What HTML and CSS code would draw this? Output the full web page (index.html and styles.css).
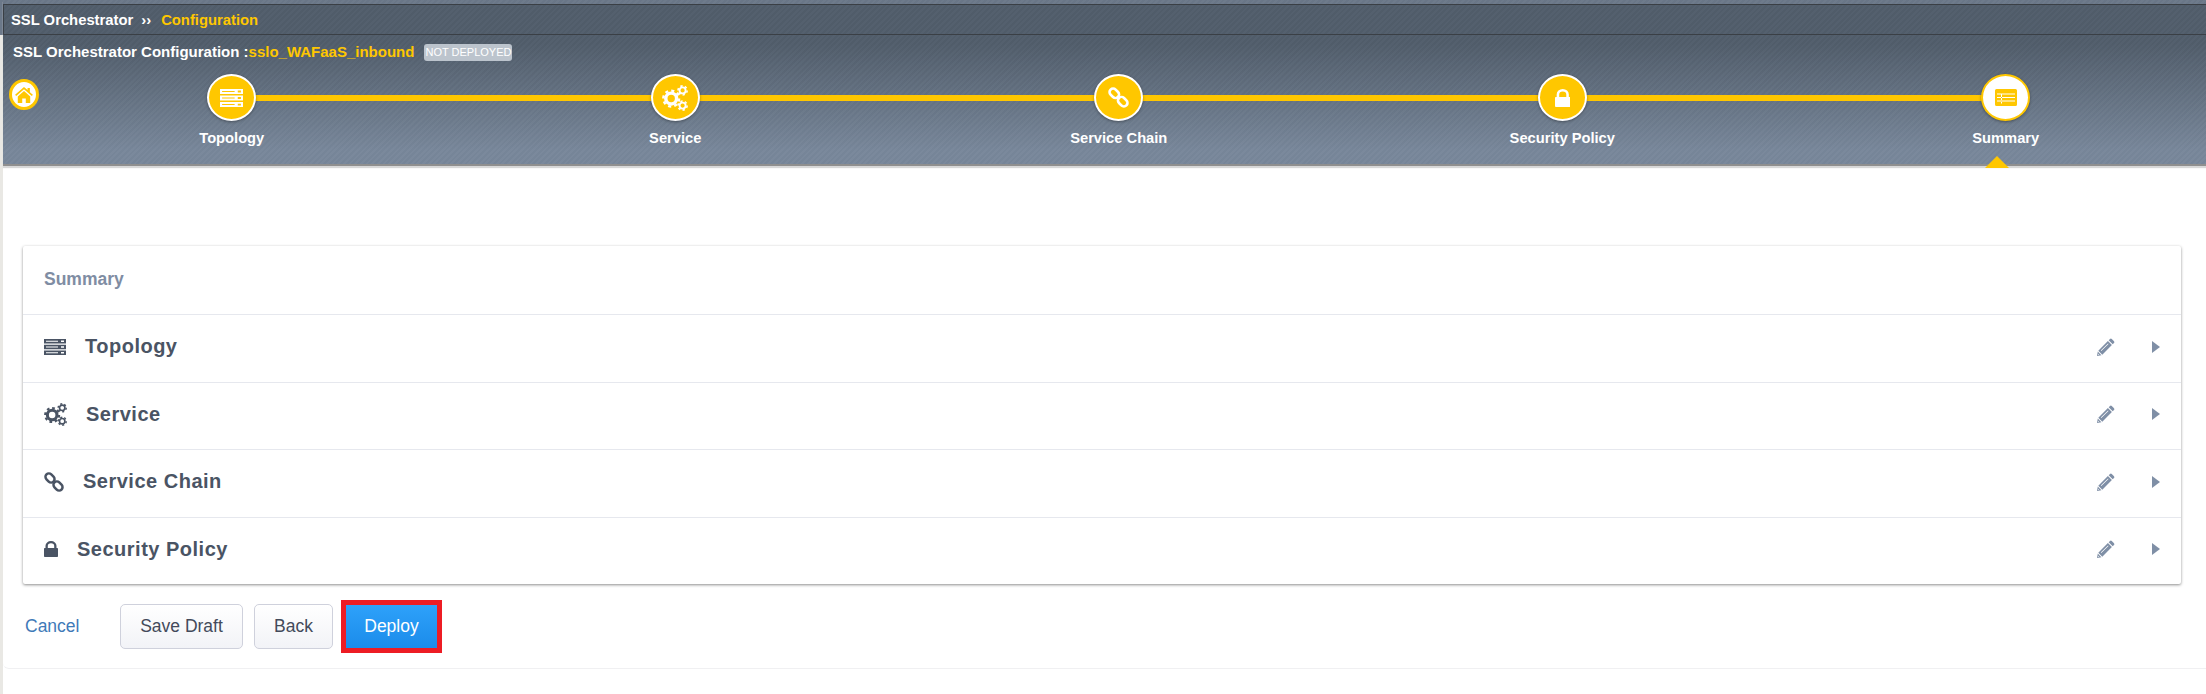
FILE: index.html
```html
<!doctype html>
<html>
    <head>
        <meta charset="utf-8">
        <title>SSL Orchestrator Configuration</title>
        <link rel="stylesheet" href="styles.css">
    </head>
    <body>
        <svg class="defs" width="0" height="0">
            <defs>
                <symbol id="i-topology" viewBox="0 0 22 16" preserveAspectRatio="none">
                    <path fill="currentColor" fill-rule="evenodd" d="M0 0h22v4.400H0zM2 1.700v1h12v-1zM17 1.400v1.600h3V1.400zM0 5.800h22v4.400H0zM2 7.500v1h12v-1zM17 7.200v1.600h3V7.200zM0 11.600h22V16H0zM2 13.300v1h12v-1zM17 13v1.600h3V13z"/>
                </symbol>
                <symbol id="i-gear" viewBox="0 0 24 24">
                    <g fill="none" stroke="currentColor">
                        <circle cx="8.500" cy="12.500" r="5" stroke-width="3.200"/>
                        <circle cx="8.500" cy="12.500" r="7.300" stroke-width="2.200" pathLength="16" stroke-dasharray="1 1"/>
                        <circle cx="19" cy="5" r="2.800" stroke-width="1.700"/>
                        <circle cx="19" cy="5" r="4.200" stroke-width="1.500" pathLength="12" stroke-dasharray="1 1"/>
                        <circle cx="19" cy="19" r="2.800" stroke-width="1.700"/>
                        <circle cx="19" cy="19" r="4.200" stroke-width="1.500" pathLength="12" stroke-dasharray="1 1"/>
                    </g>
                </symbol>
                <symbol id="i-chain" viewBox="0 0 20 20">
                    <g fill="none" stroke="currentColor" stroke-width="2.500">
                        <rect x="-5" y="-3.400" width="10" height="6.800" rx="3.400" transform="translate(6 6) rotate(45)"/>
                        <rect x="-5" y="-3.400" width="10" height="6.800" rx="3.400" transform="translate(14 14) rotate(45)"/>
                    </g>
                </symbol>
                <symbol id="i-lock" viewBox="0 0 14 16" preserveAspectRatio="none">
                    <path fill="currentColor" fill-rule="evenodd" d="M1.500 7V4.800a5.500 4.800 0 0 1 11 0V7h.7a.8.8 0 0 1 .8.800v7.400a.8.8 0 0 1-.8.800H.8a.8.8 0 0 1-.8-.800V7.800A.8.8 0 0 1 .8 7zM3.800 7h6.400V4.900a3.200 2.700 0 0 0-6.400 0z"/>
                </symbol>
                <symbol id="i-summary" viewBox="0 0 22 17" preserveAspectRatio="none">
                    <path fill="currentColor" fill-rule="evenodd" d="M1.500 0h19A1.500 1.500 0 0 1 22 1.500v14a1.500 1.500 0 0 1-1.500 1.500h-19A1.500 1.500 0 0 1 0 15.500v-14A1.500 1.500 0 0 1 1.500 0zM2 4.500v1h18v-1zM2 8v1h18V8zM2 11.500v1h18v-1zM6 5.500v9h1v-9z"/>
                </symbol>
                <symbol id="i-pencil" viewBox="0 0 18 18">
                    <path fill="currentColor" fill-rule="evenodd" d="M13 1a1.300 1.300 0 0 1 1.800 0L17 3.200a1.300 1.300 0 0 1 0 1.800l-1.300 1.300-4-4zM10.900 3.100l4 4L5.300 16.700l-4-4zM11 5.400L3.800 12.600l.5.500 7.200-7.200zM.8 13.600l3.600 3.600L0 18zM1 15.800v1.100l1.100-.3z"/>
                </symbol>
            </defs>
        </svg>

        <header class="top">
            <div class="crumbs">
                <span>SSL Orchestrator</span>
                <span class="crumbs-sep">&rsaquo;&rsaquo;</span>
                <span class="crumbs-now">Configuration</span>
            </div>
            <div class="title">
                <span>SSL Orchestrator Configuration :</span><span class="title-name">sslo_WAFaaS_inbound</span>
                <span class="badge">NOT DEPLOYED</span>
            </div>
            <div class="wizard">
                <a class="home">
                    <svg viewBox="0 0 20 18" width="18" height="16"><path d="M10 0l4 3.500V1h2.600v4.800L20 8.800l-1.200 1.400L10 2.600 1.200 10.200 0 8.800zM3 10.600L10 4.600l7 6V18h-5v-5H8v5H3z"/></svg>
                </a>
                <ul class="steps">
                    <li class="step">
                        <span class="step-dot"><svg class="ico-topology"><use href="#i-topology"/></svg></span>
                        <span class="step-name">Topology</span>
                    </li>
                    <li class="step">
                        <span class="step-dot"><svg class="ico-gear"><use href="#i-gear"/></svg></span>
                        <span class="step-name">Service</span>
                    </li>
                    <li class="step">
                        <span class="step-dot"><svg class="ico-chain"><use href="#i-chain"/></svg></span>
                        <span class="step-name">Service Chain</span>
                    </li>
                    <li class="step">
                        <span class="step-dot"><svg class="ico-lock"><use href="#i-lock"/></svg></span>
                        <span class="step-name">Security Policy</span>
                    </li>
                    <li class="step step-on">
                        <span class="step-dot"><svg class="ico-summary"><use href="#i-summary"/></svg></span>
                        <span class="step-name">Summary</span>
                    </li>
                </ul>
            </div>
        </header>

        <section class="main">
            <div class="card">
                <h2 class="card-head">Summary</h2>
                <div class="row">
                    <svg class="ico-topology"><use href="#i-topology"/></svg>
                    <span class="row-name">Topology</span>
                    <svg class="row-edit"><use href="#i-pencil"/></svg>
                    <i class="row-arrow"></i>
                </div>
                <div class="row">
                    <svg class="ico-gear"><use href="#i-gear"/></svg>
                    <span class="row-name">Service</span>
                    <svg class="row-edit"><use href="#i-pencil"/></svg>
                    <i class="row-arrow"></i>
                </div>
                <div class="row">
                    <svg class="ico-chain"><use href="#i-chain"/></svg>
                    <span class="row-name">Service Chain</span>
                    <svg class="row-edit"><use href="#i-pencil"/></svg>
                    <i class="row-arrow"></i>
                </div>
                <div class="row">
                    <svg class="ico-lock"><use href="#i-lock"/></svg>
                    <span class="row-name">Security Policy</span>
                    <svg class="row-edit"><use href="#i-pencil"/></svg>
                    <i class="row-arrow"></i>
                </div>
            </div>
            <div class="actions">
                <a class="cancel">Cancel</a>
                <button class="btn btn-save">Save Draft</button>
                <button class="btn btn-back">Back</button>
                <button class="btn btn-deploy">Deploy</button>
            </div>
        </section>
    </body>
</html>
```

FILE: styles.css
```css
*{
    margin: 0px;
    padding: 0px;
    box-sizing: border-box;
}
html,body{
    height: 100%;
    overflow: hidden;
}
body{
    font-family: "Liberation Sans", Arial, sans-serif;
    padding-left: 3px;
    background:
        linear-gradient(#6b7889, #6b7889) left top / 3px 35px no-repeat,
        linear-gradient(#e9e8e4, #e9e8e4) left top / 3px 100% no-repeat,
        #fff;
}
.defs{
    display: block;
    height: 0;
}
ul{
    list-style: none;
}

/* header */
.top{
    height: 166px;
    border-bottom: 2px solid #8f8f8f;
    box-shadow: 0 2px 1px #d8d8d8;
    background-color: #6c7a8b;
    background-image:
        repeating-linear-gradient(135deg, rgba(255,255,255,.02) 0, rgba(255,255,255,.02) 2px, rgba(0,0,0,.015) 2px, rgba(0,0,0,.015) 4px),
        linear-gradient(#6b7889 0, #6b7889 4px, #515d6b 4px, #515d6b 44px, #78879a 150px);
    padding-top: 4px;
}
.crumbs{
    height: 31px;
    border: 1px solid #3a3f45;
    border-right: 0;
    display: flex;
    align-items: center;
    padding-left: 7px;
    font-size: 14.8px;
    font-weight: bold;
    color: #fff;
}
.crumbs-sep{
    margin: 0 10px 0 8px;
}
.crumbs-now{
    color: #ffc700;
}
.title{
    height: 33px;
    display: flex;
    align-items: center;
    padding-left: 10px;
    font-size: 15px;
    font-weight: bold;
    color: #fff;
}
.title-name{
    color: #ffc700;
}
.badge{
    margin-left: 10px;
    margin-top: 2px;
    width: 88px;
    height: 17px;
    line-height: 17px;
    text-align: center;
    white-space: nowrap;
    font-size: 11px;
    font-weight: normal;
    color: #fff;
    background-color: #bcc4cd;
    border-radius: 3px;
}
.wizard{
    position: relative;
    height: 96px;
}
.home{
    position: absolute;
    left: 6px;
    top: 11px;
    width: 30px;
    height: 31px;
    border-radius: 50%;
    border: 3px solid #ffc700;
    background-color: #fff;
    fill: #ffc700;
    display: flex;
    align-items: center;
    justify-content: center;
}
.steps{
    display: flex;
    padding-left: 7px;
    width: 2300px;
}
.step{
    width: 443.5px;
    flex: none;
    display: flex;
    flex-direction: column;
    align-items: center;
    position: relative;
    padding-top: 6px;
}
.step:not(:last-child)::after{
    content: "";
    position: absolute;
    left: 222px;
    top: 27px;
    width: 443.5px;
    height: 5.5px;
    background-color: #ffc700;
}
.step-dot{
    position: relative;
    z-index: 1;
    width: 49px;
    height: 47px;
    border-radius: 50%;
    border: 2px solid #fff;
    background-color: #ffc700;
    color: #fff;
    display: flex;
    align-items: center;
    justify-content: center;
    box-shadow: 0 1px 3px rgba(0,0,0,.35);
}
.step-name{
    margin-top: 9px;
    font-size: 14.7px;
    font-weight: bold;
    color: #fff;
}
.step-on .step-dot{
    background-color: #fff;
    border-color: #ffc700;
    color: #ffc700;
}
.step-on::before{
    content: "";
    position: absolute;
    left: 201px;
    top: 88px;
    border-left: 12px solid transparent;
    border-right: 12px solid transparent;
    border-bottom: 12px solid #ffc700;
}
.ico-topology{
    width: 22px;
    height: 16px;
}
.ico-gear{
    width: 23px;
    height: 23px;
}
.ico-chain{
    width: 20px;
    height: 20px;
}
.ico-lock{
    width: 14px;
    height: 16px;
}
.ico-summary{
    width: 22px;
    height: 17px;
}
.step-dot .ico-topology{
    width: 23px;
    height: 18px;
}
.step-dot .ico-gear{
    width: 26px;
    height: 26px;
}
.step-dot .ico-chain{
    width: 21px;
    height: 21px;
}
.step-dot .ico-lock{
    width: 15.5px;
    height: 18px;
}

/* summary */
.main{
    padding: 80px 25px 0 20px;
    height: 503px;
    border-bottom: 1px solid #f0f0f2;
    border-radius: 0 0 0 6px;
}
.card{
    background-color: #fff;
    box-shadow: 0 1px 3px rgba(0,0,0,.45);
    border-radius: 2px;
    height: 338px;
}
.card-head{
    height: 68px;
    line-height: 66px;
    padding-left: 21px;
    font-size: 17.5px;
    font-weight: bold;
    color: #7f8da3;
}
.row{
    height: 67.5px;
    border-top: 1px solid #e6e8ee;
    display: flex;
    align-items: center;
    padding: 0 21px 3px 21px;
    color: #4a5464;
}
.row-name{
    margin-left: 19px;
    font-size: 20px;
    font-weight: bold;
    letter-spacing: .5px;
}
.row-edit{
    width: 18px;
    height: 18px;
    margin-left: auto;
    color: #7f8fa6;
}
.row-arrow{
    margin-left: 37px;
    border-left: 8px solid #7f8fa6;
    border-top: 6px solid transparent;
    border-bottom: 6px solid transparent;
}

/* buttons */
.actions{
    display: flex;
    align-items: center;
    margin-top: 20px;
    padding-left: 2px;
    height: 45px;
}
.cancel{
    font-size: 17.5px;
    color: #3f7ab8;
    width: 95px;
}
.btn{
    height: 45px;
    margin-right: 11px;
    font-family: "Liberation Sans", Arial, sans-serif;
    font-size: 17.5px;
    color: #434a5a;
    border: 1px solid #cfd1dc;
    border-radius: 5px;
    background: linear-gradient(#fff, #f2f3f7);
}
.btn-save{
    width: 123px;
}
.btn-back{
    width: 79px;
}
.btn-deploy{
    width: 91px;
    height: 43px;
    margin-left: 2px;
    border: 0;
    border-radius: 0;
    color: #fff;
    background: linear-gradient(#2ea1fa, #1b8cea);
    outline: 5px solid #ed1c24;
}
```
